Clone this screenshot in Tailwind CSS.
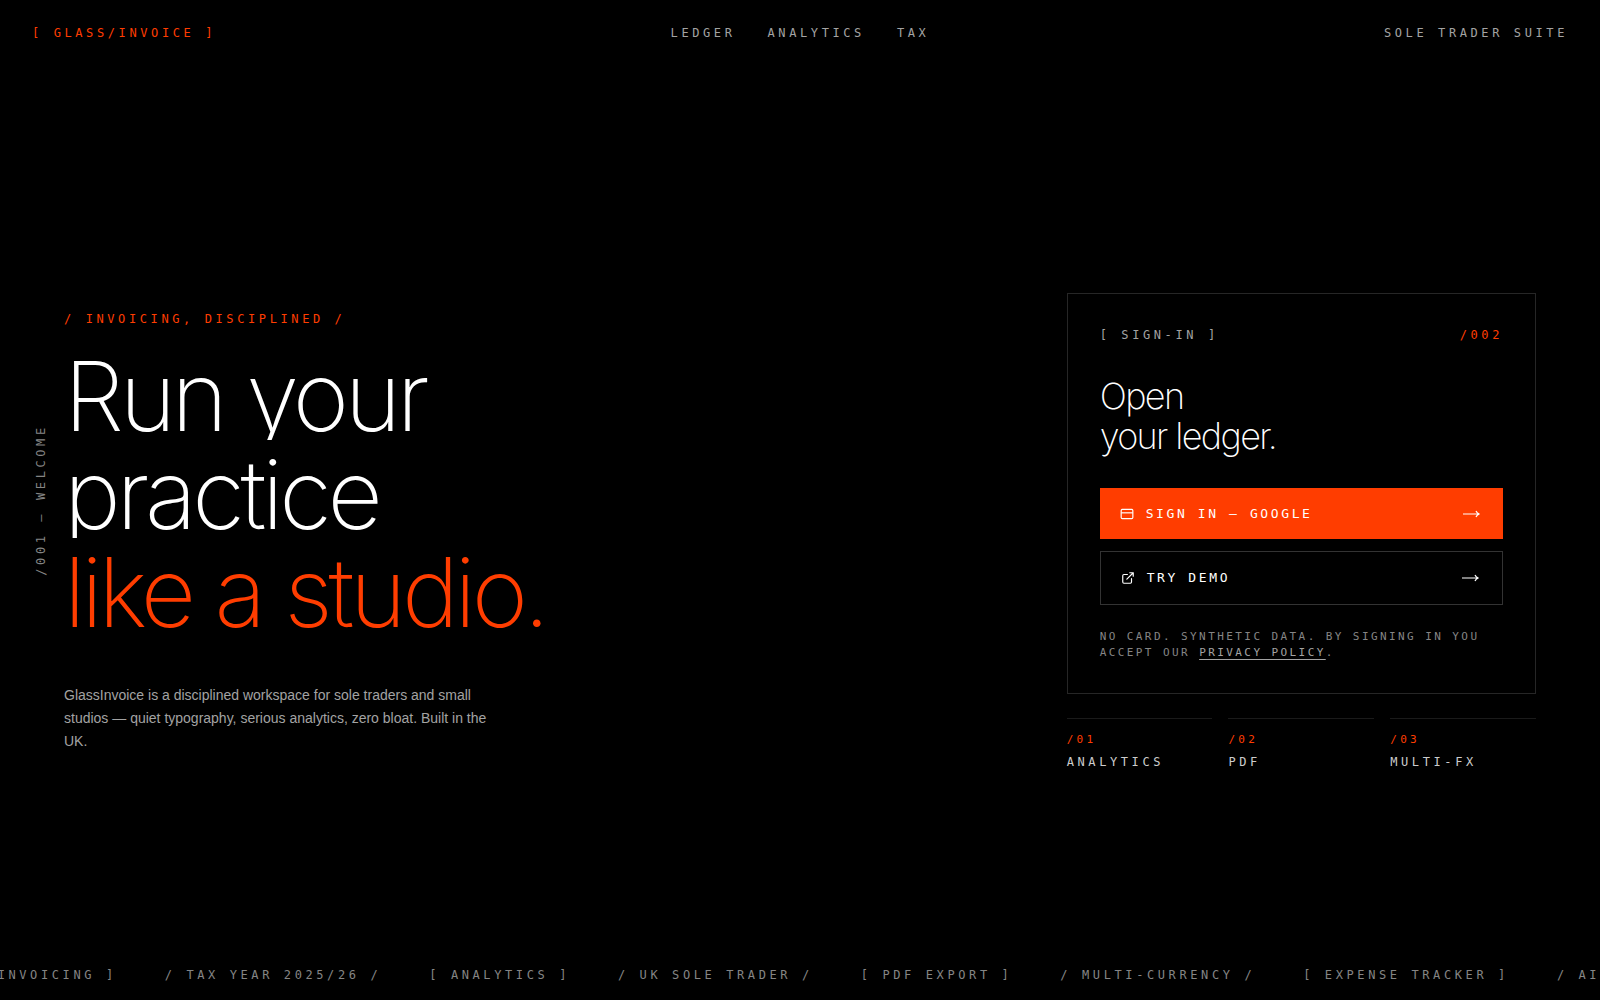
<!DOCTYPE html>
<html lang="en">
<head>
    <meta charset="UTF-8">
    <meta name="viewport" content="width=device-width, initial-scale=1.0">
    <title>Glass/Invoice</title>
    <script src="https://cdn.jsdelivr.net/npm/@tailwindcss/browser@4"></script>
</head>
<body class="bg-black text-white min-h-screen flex flex-col overflow-x-hidden font-['Inter',sans-serif]">
    <!-- Header -->
    <header class="flex items-center justify-between px-8 py-6 font-['DejaVu_Sans_Mono',monospace] text-[12px] leading-[18px] tracking-[0.3em] uppercase text-[#a3a3a3]">
        <a href="#" class="text-[#ff3d00]">[ Glass/Invoice ]</a>
        <nav class="flex gap-8">
            <a href="#">Ledger</a>
            <a href="#">Analytics</a>
            <a href="#">Tax</a>
        </nav>
        <span>Sole trader suite</span>
    </header>

    <!-- Side label -->
    <div class="absolute left-8 top-1/2 -translate-y-1/2 rotate-180 [writing-mode:vertical-rl] font-['DejaVu_Sans_Mono',monospace] text-[12px] leading-[18px] tracking-[0.3em] uppercase text-[#858585]">/001 — Welcome</div>

    <main class="flex-1 grid grid-cols-12 gap-8 items-center px-16 pt-12">
        <!-- Intro -->
        <section class="col-span-7 pb-0.5">
            <p class="font-['DejaVu_Sans_Mono',monospace] text-[12px] leading-[18px] tracking-[0.3em] uppercase text-[#ff3d00]">/ Invoicing, disciplined /</p>
            <h1 class="mt-6 flex flex-col gap-[10px] text-[96px] leading-[88px] font-extralight tracking-[-0.045em]">
                <span class="overflow-hidden">Run your</span>
                <span class="overflow-hidden">practice</span>
                <span class="overflow-hidden text-[#ff3d00]">like a studio.</span>
            </h1>
            <p class="mt-12 max-w-md text-[14px] leading-[23px] text-[#a3a3a3] font-['Liberation_Sans',sans-serif]">GlassInvoice is a disciplined workspace for sole traders and small studios — quiet typography, serious analytics, zero bloat. Built in the UK.</p>
        </section>

        <!-- Sign-in -->
        <section class="col-span-4 col-start-9 font-['DejaVu_Sans_Mono',monospace] uppercase">
            <div class="border border-[#262626] p-8">
                <div class="flex justify-between text-[12px] leading-[18px] tracking-[0.3em]">
                    <span class="text-[#a3a3a3]">[ Sign-in ]</span>
                    <span class="text-[#ff3d00]">/002</span>
                </div>
                <h2 class="mt-8 font-['Inter',sans-serif] text-[36px] leading-[40px] font-extralight tracking-[-0.045em] normal-case">Open<br>your ledger.</h2>
                <div class="mt-8 flex flex-col gap-3 text-[13px] tracking-[0.2em]">
                    <button type="button" class="flex items-center justify-between bg-[#ff3d00] px-5 py-4 leading-[19px] uppercase">
                        <span class="flex items-center gap-3">
                            <svg class="size-[14px]" viewBox="0 0 24 24" fill="none" stroke="currentColor" stroke-width="2"><rect x="2" y="4" width="20" height="16" rx="2"/><path d="M2 10h20"/></svg>
                            Sign in — Google
                        </span>
                        <svg class="w-5 h-3" viewBox="0 0 20 12" fill="none" stroke="currentColor" stroke-width="1.2"><path d="M0 6h16M13 3Q14 5.500 16.500 6Q14 6.500 13 9"/></svg>
                    </button>
                    <button type="button" class="flex items-center justify-between border border-[#333] px-5 py-4 leading-[20px] uppercase">
                        <span class="flex items-center gap-3">
                            <svg class="size-[14px]" viewBox="0 0 24 24" fill="none" stroke="currentColor" stroke-width="2" stroke-linecap="round" stroke-linejoin="round"><path d="M15 3h6v6M10 14 21 3M18 13v6a2 2 0 0 1-2 2H5a2 2 0 0 1-2-2V8a2 2 0 0 1 2-2h6"/></svg>
                            Try demo
                        </span>
                        <svg class="w-5 h-3" viewBox="0 0 20 12" fill="none" stroke="currentColor" stroke-width="1.2"><path d="M0 6h16M13 3Q14 5.500 16.500 6Q14 6.500 13 9"/></svg>
                    </button>
                </div>
                <p class="mt-6 text-[11px] leading-[16px] tracking-[0.22em] text-[#858585]">No card. Synthetic data. By signing in you accept our <a href="#" class="text-[#a3a3a3] underline underline-offset-3">privacy policy</a>.</p>
            </div>

            <!-- Features -->
            <ul class="mt-6 grid grid-cols-3 gap-4 text-[12px] leading-[18px] tracking-[0.3em] text-[#cccccc]">
                <li class="border-t border-[#1a1a1a] pt-3"><span class="block mb-1 text-[11px] leading-[18px] tracking-[0.3em] text-[#ff3d00]">/01</span>Analytics</li>
                <li class="border-t border-[#1a1a1a] pt-3"><span class="block mb-1 text-[11px] leading-[18px] tracking-[0.3em] text-[#ff3d00]">/02</span>PDF</li>
                <li class="border-t border-[#1a1a1a] pt-3"><span class="block mb-1 text-[11px] leading-[18px] tracking-[0.3em] text-[#ff3d00]">/03</span>Multi-FX</li>
            </ul>
        </section>
    </main>

    <!-- Ticker -->
    <footer class="overflow-hidden py-4 font-['DejaVu_Sans_Mono',monospace] text-[12px] leading-[18px] tracking-[0.3em] uppercase text-[#858585]">
        <div class="flex gap-12 -ml-6 whitespace-nowrap">
            <span>[ Invoicing ]</span>
            <span>/ Tax year 2025/26 /</span>
            <span>[ Analytics ]</span>
            <span>/ UK sole trader /</span>
            <span>[ PDF export ]</span>
            <span>/ Multi-currency /</span>
            <span>[ Expense tracker ]</span>
            <span>/ AI</span>
        </div>
    </footer>
</body>
</html>
